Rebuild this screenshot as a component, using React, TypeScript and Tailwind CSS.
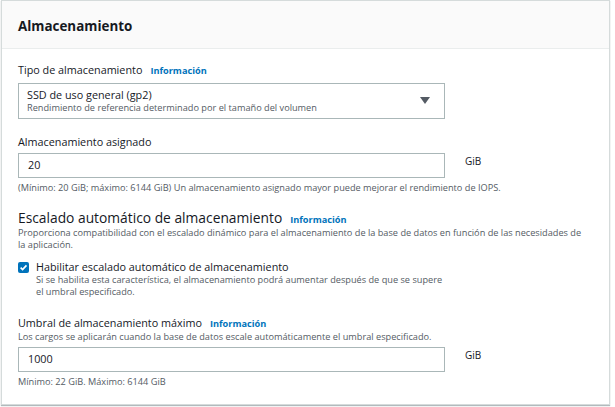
import React from "react";

const font = { fontFamily: '"Open Sans", "Noto Sans", sans-serif' };

function Info() {
  return <span className="ml-[8px] text-[9.2px] font-bold text-[#0073bb]">Información</span>;
}

export default function App() {
  return (
    <div className="w-[615px] h-[407px] bg-white pl-[1px] pr-[5px] pb-[2px]" style={font}>
      <div className="h-full border border-[#d5dbdb] shadow-[0_1px_1px_rgba(0,28,36,0.3)] flex flex-col text-[#16191f]">
        <div className="h-[48px] bg-[#fafafa] border-b border-[#eaeded] flex items-center px-[16px] pt-[3px] shrink-0">
          <h2 className="text-[13.4px] font-bold">Almacenamiento</h2>
        </div>
        <div className="px-[16px] pt-[14px] flex flex-col">
          <div className="text-[10.8px] leading-[14px] flex items-baseline">
            Tipo de almacenamiento
            <Info />
          </div>
          <div className="mt-[5px] w-[427px] h-[36px] border border-[#aab7b8] flex items-center pl-[8px] pr-[14px]">
            <div className="flex-1 flex flex-col">
              <span className="text-[10.8px] leading-[14px]">SSD de uso general (gp2)</span>
              <span className="text-[9.2px] leading-[12px] text-[#545b64]">
                Rendimiento de referencia determinado por el tamaño del volumen
              </span>
            </div>
            <svg width="10" height="8" viewBox="0 0 10 8">
              <path d="M0 0h10L5 7z" fill="#545b64" />
            </svg>
          </div>

          <div className="mt-[16px] text-[10.8px] leading-[14px]">Almacenamiento asignado</div>
          <div className="mt-[4px] flex items-start">
            <div className="w-[427px] h-[25px] border border-[#aab7b8] flex items-center pl-[9px] text-[10.8px]">20</div>
            <span className="ml-[20px] mt-[1px] text-[10px]">GiB</span>
          </div>
          <div className="mt-[4px] text-[9.2px] leading-[12px] text-[#545b64]">
            (Mínimo: 20 GiB; máximo: 6144 GiB) Un almacenamiento asignado mayor puede mejorar el rendimiento de IOPS.
          </div>

          <div className="mt-[15px] flex items-baseline">
            <span className="text-[13.8px] leading-[17px]">Escalado automático de almacenamiento</span>
            <Info />
          </div>
          <div className="text-[9.2px] leading-[12px] text-[#545b64] w-[565px]">
            Proporciona compatibilidad con el escalado dinámico para el almacenamiento de la base de datos en función de las necesidades de la aplicación.
          </div>

          <div className="mt-[9px] flex items-start">
            <div className="mt-[2px] w-[11px] h-[11px] rounded-[2px] bg-[#0073bb] flex items-center justify-center shrink-0">
              <svg width="9" height="9" viewBox="0 0 10 10">
                <path d="M1.8 5.2 4 7.4 8.3 2.6" stroke="white" strokeWidth="1.8" fill="none" />
              </svg>
            </div>
            <div className="ml-[7px] flex flex-col">
              <span className="text-[10.8px] leading-[14px]">Habilitar escalado automático de almacenamiento</span>
              <span className="text-[9.2px] leading-[12px] text-[#545b64] w-[413px]">
                Si se habilita esta característica, el almacenamiento podrá aumentar después de que se supere el umbral especificado.
              </span>
            </div>
          </div>

          <div className="mt-[18px] text-[10.8px] leading-[14px] flex items-baseline">
            Umbral de almacenamiento máximo
            <Info />
          </div>
          <div className="text-[9.2px] leading-[12px] text-[#545b64]">
            Los cargos se aplicarán cuando la base de datos escale automáticamente el umbral especificado.
          </div>
          <div className="mt-[4px] flex items-start">
            <div className="w-[427px] h-[25px] border border-[#aab7b8] flex items-center pl-[9px] text-[10.8px]">1000</div>
            <span className="ml-[20px] mt-[1px] text-[10px]">GiB</span>
          </div>
          <div className="mt-[4px] text-[9.2px] leading-[12px] text-[#545b64]">Mínimo: 22 GiB. Máximo: 6144 GiB</div>
        </div>
      </div>
    </div>
  );
}
